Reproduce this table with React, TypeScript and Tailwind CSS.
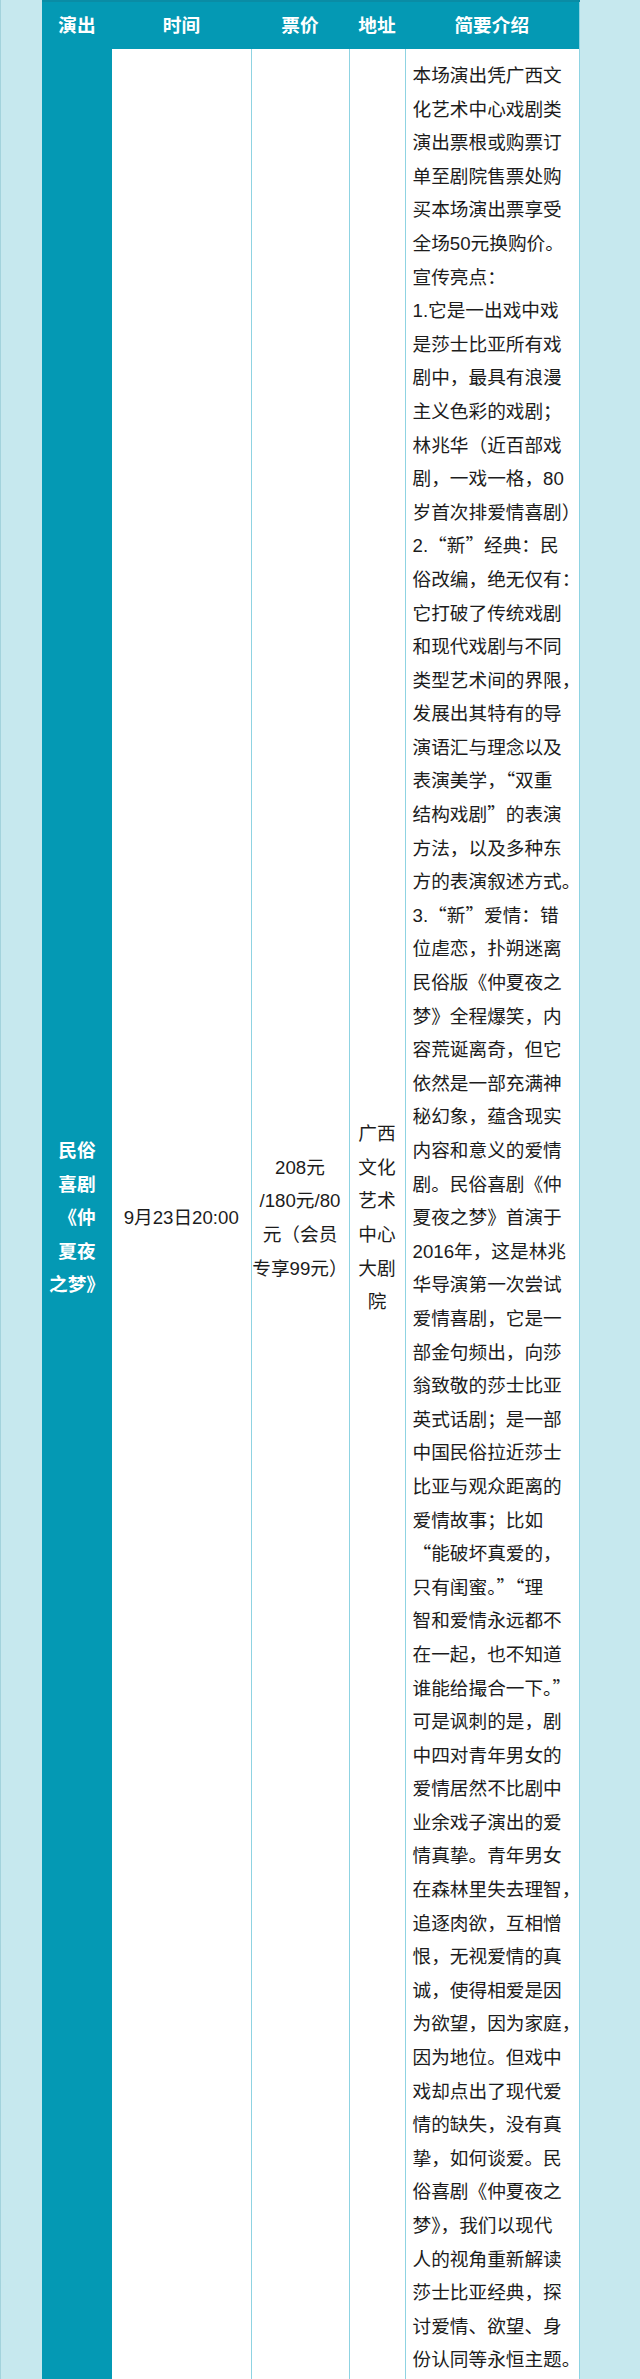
import React from "react";

const intro = [
  "本场演出凭广西文",
  "化艺术中心戏剧类",
  "演出票根或购票订",
  "单至剧院售票处购",
  "买本场演出票享受",
  "全场50元换购价。",
  "宣传亮点：",
  "1.它是一出戏中戏",
  "是莎士比亚所有戏",
  "剧中，最具有浪漫",
  "主义色彩的戏剧；",
  "林兆华（近百部戏",
  "剧，一戏一格，80",
  "岁首次排爱情喜剧）",
  "2.“新”经典：民",
  "俗改编，绝无仅有：",
  "它打破了传统戏剧",
  "和现代戏剧与不同",
  "类型艺术间的界限，",
  "发展出其特有的导",
  "演语汇与理念以及",
  "表演美学，“双重",
  "结构戏剧”的表演",
  "方法，以及多种东",
  "方的表演叙述方式。",
  "3.“新”爱情：错",
  "位虐恋，扑朔迷离",
  "民俗版《仲夏夜之",
  "梦》全程爆笑，内",
  "容荒诞离奇，但它",
  "依然是一部充满神",
  "秘幻象，蕴含现实",
  "内容和意义的爱情",
  "剧。民俗喜剧《仲",
  "夏夜之梦》首演于",
  "2016年，这是林兆",
  "华导演第一次尝试",
  "爱情喜剧，它是一",
  "部金句频出，向莎",
  "翁致敬的莎士比亚",
  "英式话剧；是一部",
  "中国民俗拉近莎士",
  "比亚与观众距离的",
  "爱情故事；比如",
  "“能破坏真爱的，",
  "只有闺蜜。”“理",
  "智和爱情永远都不",
  "在一起，也不知道",
  "谁能给撮合一下。”",
  "可是讽刺的是，剧",
  "中四对青年男女的",
  "爱情居然不比剧中",
  "业余戏子演出的爱",
  "情真挚。青年男女",
  "在森林里失去理智，",
  "追逐肉欲，互相憎",
  "恨，无视爱情的真",
  "诚，使得相爱是因",
  "为欲望，因为家庭，",
  "因为地位。但戏中",
  "戏却点出了现代爱",
  "情的缺失，没有真",
  "挚，如何谈爱。民",
  "俗喜剧《仲夏夜之",
  "梦》，我们以现代",
  "人的视角重新解读",
  "莎士比亚经典，探",
  "讨爱情、欲望、身",
  "份认同等永恒主题。",
];

const show = ["民俗", "喜剧", "《仲", "夏夜", "之梦》"];
const price = ["208元", "/180元/80", "元（会员", "专享99元）"];
const venue = ["广西", "文化", "艺术", "中心", "大剧", "院"];

// curly quotes need the CJK font so they come out full width
function withQuotes(t: string) {
  return t.split(/([“”])/).map((part, i) =>
    part === "“" || part === "”" ? (
      <span key={i} className="font-['Noto_Sans_CJK_SC'] leading-none">
        {part}
      </span>
    ) : (
      part
    ),
  );
}

function Lines({ items }: { items: string[] }) {
  return (
    <>
      {items.map((t, i) => (
        <div key={i} className="whitespace-nowrap h-[33.6px]">
          {withQuotes(t)}
        </div>
      ))}
    </>
  );
}

export default function App() {
  return (
    <div
      className="min-h-screen w-full bg-[#c6e8ee] border-l border-[#a3d3dc] pl-[41px] text-[18.67px] leading-[33.6px] text-[#1c1c1c]"
      style={{ fontFamily: '"Liberation Sans", "Noto Sans CJK SC", sans-serif' }}
    >
      <table className="table-fixed border-collapse w-[537px]">
        <colgroup>
          <col className="w-[70px]" />
          <col className="w-[139px]" />
          <col className="w-[98px]" />
          <col className="w-[56px]" />
          <col className="w-[174px]" />
        </colgroup>
        <thead>
          <tr className="h-[48px] bg-[#0499b4] text-white font-bold text-[18.67px] border-t-2 border-[#0a8ca5]">
            <th className="p-0 text-center">演出</th>
            <th className="p-0 text-center">时间</th>
            <th className="p-0 text-center">票价</th>
            <th className="p-0 text-center">地址</th>
            <th className="p-0 text-center border-r border-[#8fd3e2]">简要介绍</th>
          </tr>
        </thead>
        <tbody>
          <tr>
            <td className="bg-[#0499b4] text-white font-bold text-center align-middle p-0">
              <Lines items={show} />
            </td>
            <td className="bg-white text-center align-middle p-0 border-r border-[#8fd3e2]">
              9月23日20:00
            </td>
            <td className="bg-white text-center align-middle p-0 border-r border-[#8fd3e2]">
              <Lines items={price} />
            </td>
            <td className="bg-white text-center align-middle p-0 border-r border-[#8fd3e2]">
              <Lines items={venue} />
            </td>
            <td className="bg-white align-top pl-[7px] pr-0 pt-[10px] pb-[10px] border-r border-[#8fd3e2]">
              <Lines items={intro} />
            </td>
          </tr>
        </tbody>
      </table>
    </div>
  );
}
